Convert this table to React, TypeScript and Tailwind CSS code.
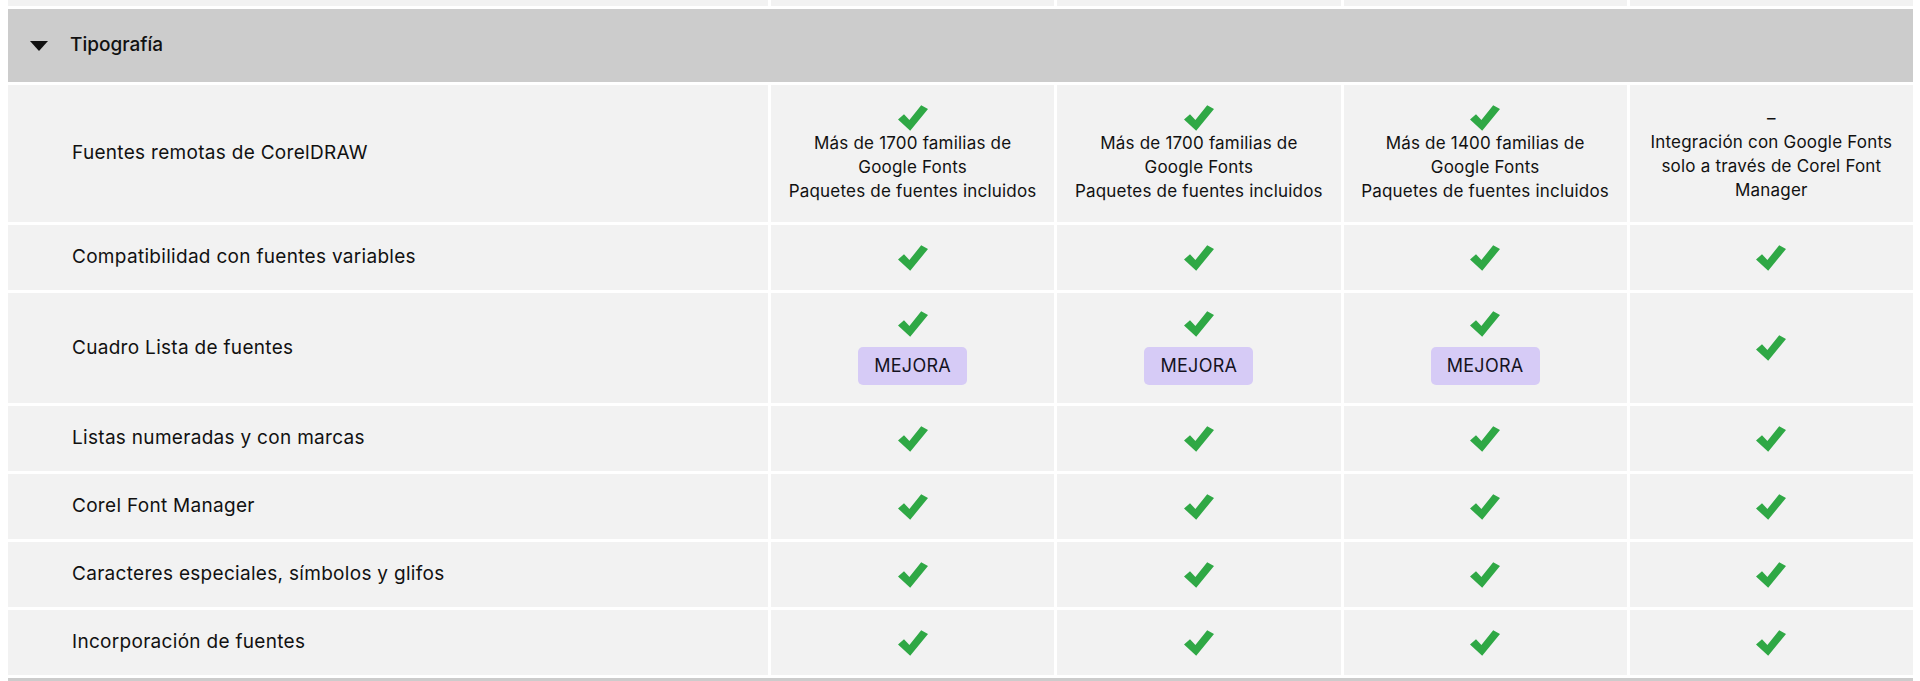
import React from 'react';

type Cell = {
  check?: boolean;
  dash?: boolean;
  badge?: boolean;
  lines?: string[];
};

type Row = { label: string; cells: Cell[] };

const fonts = (n: string) => ['Más de ' + n + ' familias de', 'Google Fonts', 'Paquetes de fuentes incluidos'];

const rows: Row[] = [
  {
    label: 'Fuentes remotas de CorelDRAW',
    cells: [
      { check: true, lines: fonts('1700') },
      { check: true, lines: fonts('1700') },
      { check: true, lines: fonts('1400') },
      { dash: true, lines: ['Integración con Google Fonts', 'solo a través de Corel Font', 'Manager'] },
    ],
  },
  { label: 'Compatibilidad con fuentes variables', cells: [{ check: true }, { check: true }, { check: true }, { check: true }] },
  {
    label: 'Cuadro Lista de fuentes',
    cells: [{ check: true, badge: true }, { check: true, badge: true }, { check: true, badge: true }, { check: true }],
  },
  { label: 'Listas numeradas y con marcas', cells: [{ check: true }, { check: true }, { check: true }, { check: true }] },
  { label: 'Corel Font Manager', cells: [{ check: true }, { check: true }, { check: true }, { check: true }] },
  { label: 'Caracteres especiales, símbolos y glifos', cells: [{ check: true }, { check: true }, { check: true }, { check: true }] },
  { label: 'Incorporación de fuentes', cells: [{ check: true }, { check: true }, { check: true }, { check: true }] },
];

function Check() {
  return (
    <svg width="30" height="26" viewBox="0 0 30 26" className="block">
      <path d="M0 14.5 L6 9.2 L11.4 15 L23.2 0.3 L30 4 L12.2 25.7 Z" fill="#2fa845" />
    </svg>
  );
}

function ValueCell({ cell }: { cell: Cell }) {
  return (
    <div className="flex flex-col items-center justify-center bg-[#f2f2f2] text-center text-[17px] leading-[24px] tracking-[0.2px] text-[#111]">
      {cell.check && (
        <div>
          <Check />
        </div>
      )}
      {cell.dash && <div>–</div>}
      {cell.lines?.map((l) => (
        <div key={l}>{l}</div>
      ))}
      {cell.badge && (
        <div className="mt-[10px] flex h-[38px] w-[109px] items-center justify-center rounded-[5px] bg-[#d6cbf6] text-[18px] tracking-[0.3px] text-[#15131f]">
          MEJORA
        </div>
      )}
    </div>
  );
}

export default function App() {
  return (
    <div
      className="h-[681px] overflow-hidden bg-white pl-2 pr-[7px]"
      style={{ fontFamily: 'Inter, "Noto Sans", sans-serif' }}
    >
      <div className="grid grid-cols-[760px_repeat(4,minmax(0,1fr))] grid-rows-[6px_73px_137px_65px_110px_65px_65px_65px_65px_73px] gap-[3px]">
        {[0, 1, 2, 3, 4].map((i) => (
          <div key={i} className="bg-[#f2f2f2]" />
        ))}

        <div className="col-span-5 flex items-center gap-[22px] bg-[#cccccc] pl-[22px]">
          <svg width="18" height="10" viewBox="0 0 18 10" className="block">
            <path d="M0 0 H18 L9 10 Z" fill="#111" />
          </svg>
          <span className="text-[19px] font-medium text-[#111]">Tipografía</span>
        </div>

        {rows.map((r) => (
          <React.Fragment key={r.label}>
            <div className="flex items-center bg-[#f2f2f2] pl-16 text-[19px] tracking-[0.3px] text-[#111]">{r.label}</div>
            {r.cells.map((c, i) => (
              <ValueCell key={i} cell={c} />
            ))}
          </React.Fragment>
        ))}

        <div className="col-span-5 bg-[#cccccc]" />
      </div>
    </div>
  );
}
